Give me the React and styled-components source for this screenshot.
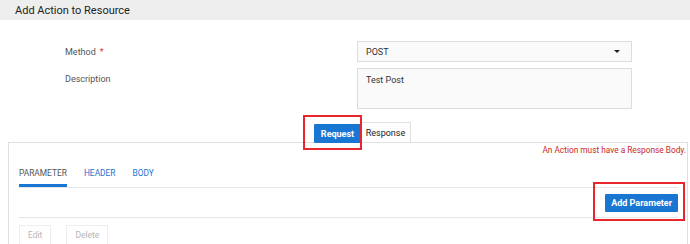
import styled, { createGlobalStyle } from "styled-components"

const GlobalStyle = createGlobalStyle`
  html, body {
    margin: 0;
    padding: 0;
    background: #ffffff;
    font-family: Roboto, "Liberation Sans", Arial, sans-serif;
    overflow: hidden;
  }
`

const Page = styled.div`
  position: relative;
  width: 690px;
  height: 244px;
  overflow: hidden;
`

const Header = styled.div`
  height: 20px;
  display: flex;
  align-items: center;
  padding-left: 15px;
  background: #eeeeee;
  font-size: 11px;
  color: #222;
`

const Form = styled.div`
  display: grid;
  grid-template-columns: 292px 275px;
  row-gap: 6px;
  margin-top: 21px;
  padding-left: 65px;
`

const Label = styled.div`
  font-size: 9px;
  color: #555;
  display: flex;
  align-items: ${(p) => (p.$top ? "flex-start" : "center")};
  padding-top: ${(p) => (p.$top ? "6px" : "0")};
`

const Required = styled.span`
  color: #e53935;
  margin-left: 4px;
`

const Select = styled.div`
  box-sizing: border-box;
  height: 21px;
  display: flex;
  align-items: center;
  justify-content: space-between;
  padding: 0 8px;
  border: 1px solid #dddddd;
  background: #fafafa;
  font-size: 9px;
  color: #333;
`

const Caret = styled.span`
  width: 0;
  height: 0;
  margin-right: 3px;
  border-left: 3px solid transparent;
  border-right: 3px solid transparent;
  border-top: 3px solid #222;
`

const TextArea = styled.div`
  box-sizing: border-box;
  height: 41px;
  padding: 6px 8px;
  border: 1px solid #dddddd;
  background: #fafafa;
  font-size: 9px;
  color: #333;
`

const TabRow = styled.div`
  display: flex;
  align-items: flex-end;
  height: 20px;
  margin-top: 13px;
  padding-left: 314px;
  position: relative;
  z-index: 1;
`

const TabButton = styled.div`
  box-sizing: border-box;
  display: flex;
  align-items: center;
  justify-content: center;
  font-size: 9px;
  ${(p) =>
    p.$active
      ? `
    width: 47px;
    height: 19px;
    margin-bottom: -1px;
    background: #1976d2;
    color: #fff;
    font-weight: 700;
    border-radius: 1px;
  `
      : `
    width: 50px;
    height: 20px;
    background: #fff;
    color: #222;
    border: 1px solid #e0e0e0;
    border-bottom: none;
    border-left: none;
  `}
`

const Panel = styled.div`
  margin: 0 2px 0 8px;
  min-height: 110px;
  padding: 0 9px 0 10px;
  border: 1px solid #e0e0e0;
  border-bottom: none;
`

const ErrorText = styled.div`
  text-align: right;
  margin-right: -8px;
  height: 14px;
  line-height: 14px;
  font-size: 8.3px;
  color: #c62828;
`

const SubTabs = styled.div`
  display: flex;
  gap: 17px;
  margin-top: 6px;
  border-bottom: 1px solid #e6e6e6;
`

const SubTab = styled.div`
  height: 24px;
  line-height: 21px;
  box-sizing: border-box;
  font-size: 8.4px;
  text-transform: uppercase;
  color: ${(p) => (p.$active ? "#555" : "#1976d2")};
  border-bottom: 3px solid ${(p) => (p.$active ? "#1976d2" : "transparent")};
`

const Toolbar = styled.div`
  height: 29px;
  display: flex;
  align-items: center;
  justify-content: flex-end;
  border-bottom: 1px solid #e6e6e6;
`

const PrimaryButton = styled.div`
  height: 18px;
  padding: 0 6px;
  display: flex;
  align-items: center;
  background: #1976d2;
  color: #fff;
  font-size: 9px;
  font-weight: 700;
  border-radius: 1px;
`

const Actions = styled.div`
  display: flex;
  gap: 15px;
  margin-top: 7px;
`

const GhostButton = styled.div`
  box-sizing: border-box;
  height: 20px;
  padding: 0 8px;
  display: flex;
  align-items: center;
  border: 1px solid #eeeeee;
  font-size: 8.5px;
  color: #b5b5b5;
`

const Highlight = styled.div`
  position: absolute;
  box-sizing: border-box;
  border: 2px solid #e8262b;
  left: ${(p) => p.$x}px;
  top: ${(p) => p.$y}px;
  width: ${(p) => p.$w}px;
  height: ${(p) => p.$h}px;
  z-index: 2;
  pointer-events: none;
`

export default function App() {
  return (
    <Page>
      <GlobalStyle />
      <Header>Add Action to Resource</Header>
      <Form>
        <Label>
          Method<Required>*</Required>
        </Label>
        <Select>
          POST
          <Caret />
        </Select>
        <Label $top>Description</Label>
        <TextArea>Test Post</TextArea>
      </Form>
      <TabRow>
        <TabButton $active>Request</TabButton>
        <TabButton>Response</TabButton>
      </TabRow>
      <Panel>
        <ErrorText>An Action must have a Response Body.</ErrorText>
        <SubTabs>
          <SubTab $active>Parameter</SubTab>
          <SubTab>Header</SubTab>
          <SubTab>Body</SubTab>
        </SubTabs>
        <Toolbar>
          <PrimaryButton>Add Parameter</PrimaryButton>
        </Toolbar>
        <Actions>
          <GhostButton>Edit</GhostButton>
          <GhostButton>Delete</GhostButton>
        </Actions>
      </Panel>
      <Highlight $x={303} $y={115} $w={59} $h={35} />
      <Highlight $x={593} $y={182} $w={92} $h={39} />
    </Page>
  )
}
